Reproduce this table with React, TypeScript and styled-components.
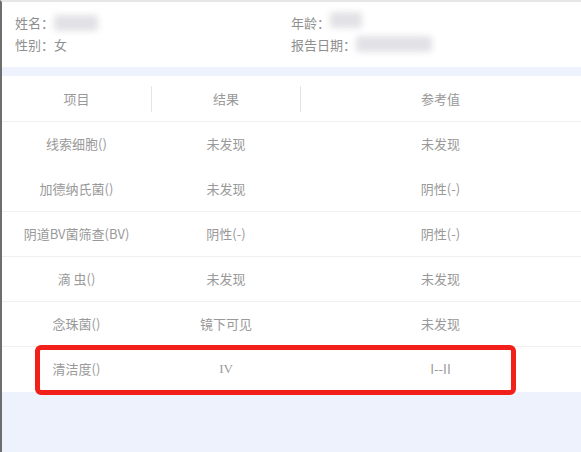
import styled, { createGlobalStyle } from "styled-components"
import { FC } from 'react';

const GlobalStyle = createGlobalStyle`
    html, body {
        margin: 0;
        padding: 0;
        background: #fff;
    }
    body {
        font-family: "Noto Sans CJK SC", "Noto Sans", sans-serif;
    }
`

const Page = styled.div `
    position: relative;
    width: 581px;
    height: 452px;
    box-sizing: border-box;
    border-left: 2px solid #6e6e6e;
    border-top: 2px solid #e6e6e6;
    background-color: #edf2fd;
    overflow: hidden;
    display: flex;
    flex-direction: column;
`

const InfoPanel = styled.div `
    background-color: #fff;
    height: 65px;
    box-sizing: border-box;
    padding: 9px 0 0 13px;
    display: grid;
    grid-template-columns: 276px 1fr;
    grid-auto-rows: 22px;
    font-size: 13px;
    color: #8f8f8f;
`

const InfoItem = styled.div `
    display: flex;
    align-items: center;
    white-space: nowrap;
`

const Blur = styled.span<{ $w: number; $dy?: number }> `
    display: inline-block;
    width: ${p => p.$w}px;
    height: 16px;
    margin-top: ${p => p.$dy || 0}px;
    background: #e2e2e6;
    filter: blur(3px);
    border-radius: 3px;
`

const Table = styled.div `
    margin-top: 9px;
    background-color: #fff;
`

const Row = styled.div<{ $head?: boolean; $line?: boolean }> `
    display: grid;
    grid-template-columns: 150px 149px 1fr;
    height: ${p => p.$head ? 46 : 45}px;
    align-items: center;
    font-size: 13px;
    color: #999;
    border-bottom: 1px solid ${p => p.$line ? '#f0f0f0' : 'transparent'};
    box-sizing: border-box;
`

const Cell = styled.div<{ $divider?: boolean; $serif?: boolean }> `
    text-align: center;
    height: 26px;
    line-height: 26px;
    border-right: 1px solid ${p => p.$divider ? '#e4e4e4' : 'transparent'};
    font-family: ${p => p.$serif ? '"Liberation Serif", serif' : 'inherit'};
    white-space: nowrap;
`

const Highlight = styled.div `
    position: absolute;
    left: 33px;
    top: 343px;
    width: 481px;
    height: 50px;
    box-sizing: border-box;
    border: 5px solid #f2201b;
    border-radius: 6px;
`

interface Item {
    name: string;
    result: string;
    ref: string;
    line: boolean;
    serif?: boolean;
}

const items: Item[] = [
    { name: '线索细胞()', result: '未发现', ref: '未发现', line: false },
    { name: '加德纳氏菌()', result: '未发现', ref: '阴性(-)', line: true },
    { name: '阴道BV菌筛查(BV)', result: '阴性(-)', ref: '阴性(-)', line: true },
    { name: '滴 虫()', result: '未发现', ref: '未发现', line: true },
    { name: '念珠菌()', result: '镜下可见', ref: '未发现', line: true },
    { name: '清洁度()', result: 'IV', ref: 'I--II', line: false, serif: true },
]

const App: FC = () => {
    return (
        <>
            <GlobalStyle />
            <Page>
                <InfoPanel>
                    <InfoItem>姓名：<Blur $w={44} $dy={2} /></InfoItem>
                    <InfoItem>年龄：<Blur $w={32} $dy={-4} /></InfoItem>
                    <InfoItem>性别：女</InfoItem>
                    <InfoItem>报告日期：<Blur $w={76} /></InfoItem>
                </InfoPanel>
                <Table>
                    <Row $head $line>
                        <Cell $divider>项目</Cell>
                        <Cell $divider>结果</Cell>
                        <Cell>参考值</Cell>
                    </Row>
                    {items.map(it => (
                        <Row key={it.name} $line={it.line}>
                            <Cell>{it.name}</Cell>
                            <Cell $serif={it.serif}>{it.result}</Cell>
                            <Cell>{it.ref}</Cell>
                        </Row>
                    ))}
                </Table>
                <Highlight />
            </Page>
        </>
    )
}

export default App
